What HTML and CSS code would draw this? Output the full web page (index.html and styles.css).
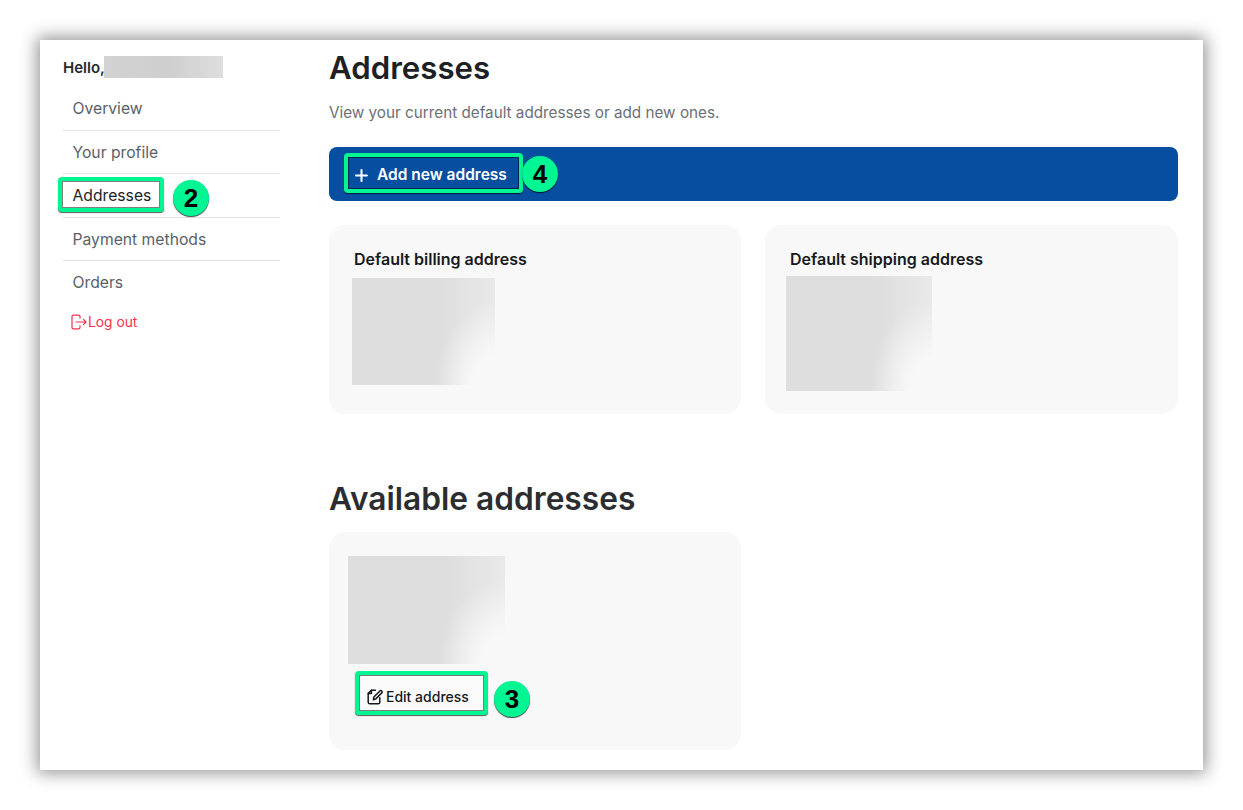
FILE: index.html
```html
<!DOCTYPE html>
<html lang="en">
<head>
<meta charset="utf-8">
<title>Addresses</title>
<link rel="stylesheet" href="styles.css">
</head>
<body>
<div class="window">
  <aside class="sidebar">
    <div class="hello">Hello,<span class="redact redact-name"></span></div>
    <nav class="menu">
      <a class="item">Overview</a>
      <a class="item">Your profile</a>
      <a class="item item-active"><span class="hl hl-nav"></span><span class="label-active">Addresses</span><span class="badge badge-nav">2</span></a>
      <a class="item">Payment methods</a>
      <a class="item item-last">Orders</a>
    </nav>
    <a class="logout">
      <svg class="logout-icon" viewBox="0 0 16 16" fill="none" stroke="currentColor" stroke-width="1.2" stroke-linecap="round" stroke-linejoin="round"><path d="M9 4.2V2.6A1.4 1.4 0 0 0 7.6 1.2H2.4A1.4 1.4 0 0 0 1 2.6v10.8a1.4 1.4 0 0 0 1.4 1.4h5.2A1.4 1.4 0 0 0 9 13.4v-1.6"/><path d="M5 8h10M12.4 5.4 15 8l-2.6 2.6"/></svg>
      <span>Log out</span>
    </a>
  </aside>
  <main class="content">
    <h1 class="title">Addresses</h1>
    <p class="lead">View your current default addresses or add new ones.</p>
    <div class="bar">
      <button class="add-btn">
        <span class="hl hl-add"></span>
        <svg class="plus" viewBox="0 0 12 12" fill="none" stroke="currentColor" stroke-width="1.9" stroke-linecap="round"><path d="M6 1v10M1 6h10"/></svg>
        <span>Add new address</span>
        <span class="badge badge-add">4</span>
      </button>
    </div>
    <div class="cards">
      <section class="card">
        <h2 class="card-title">Default billing address</h2>
        <div class="redact redact-billing"></div>
      </section>
      <section class="card">
        <h2 class="card-title">Default shipping address</h2>
        <div class="redact redact-shipping"></div>
      </section>
    </div>
    <h2 class="subtitle">Available addresses</h2>
    <div class="cards">
      <section class="card card-plain">
        <div class="redact redact-address"></div>
        <button class="edit-btn">
          <span class="hl hl-edit"></span>
          <svg class="edit-icon" viewBox="0 0 16 16" fill="none" stroke="currentColor" stroke-width="1.5" stroke-linecap="round" stroke-linejoin="round"><path d="M8.4 1.2H4.4L1.2 4.4v8.8a1.6 1.6 0 0 0 1.6 1.6h8.4a1.6 1.6 0 0 0 1.6-1.6V8.8"/><path d="M4.4 1.2v3.2H1.2"/><path d="M6.4 10.8 6.9 8l6-6a1.3 1.3 0 0 1 1.9 1.9l-6 6z"/></svg>
          <span>Edit address</span>
          <span class="badge badge-edit">3</span>
        </button>
      </section>
    </div>
  </main>
</div>
</body>
</html>
```
FILE: styles.css
```css
* { box-sizing: border-box; }
html, body { margin: 0; height: 100%; }
body {
  width: 1243px;
  height: 810px;
  padding: 40px;
  background: #fff;
  font-family: Inter, "Noto Sans", sans-serif;
  overflow: hidden;
}
.window {
  width: 1163px;
  height: 730px;
  display: flex;
  background: #fff;
  box-shadow: 0 0 16px 3px rgba(0, 0, 0, .42);
  padding: 15px 25px 0 23px;
}
.sidebar { width: 217px; flex: none; margin-right: 49px; }
.hello {
  display: flex;
  height: 23px;
  padding-top: 1px;
  font-size: 15px;
  font-weight: 600;
  line-height: 23px;
  color: #26292d;
}
.redact-name {
  width: 119px;
  height: 22px;
  margin-left: -1px;
  background: linear-gradient(90deg, #d2d2d2, #cfcfcf 55%, #dedede);
}
.menu { display: flex; flex-direction: column; margin-top: 9px; }
.item {
  position: relative;
  height: 43.5px;
  padding: 10px 0 0 9.5px;
  font-size: 15.7px;
  line-height: 24px;
  color: #5a6068;
  border-bottom: 1px solid #e3e3e3;
}
.item-last { border-bottom: 0; }
.label-active { position: relative; color: #20242a; }
.hl {
  position: absolute;
  border: 4px solid #00f593;
  border-radius: 4px;
  box-shadow: 0 1px 1px rgba(0, 0, 0, .65), inset 0 0 0 1px rgba(0, 0, 0, .5);
}
.hl-nav { left: -5px; top: 3px; width: 106px; height: 35px; background: #fff; }
.badge {
  position: absolute;
  width: 36px;
  height: 36px;
  border-radius: 50%;
  background: #00f593;
  color: #000;
  font-family: "Liberation Sans", Arial, sans-serif;
  font-weight: 700;
  font-size: 26px;
  line-height: 36px;
  text-align: center;
  box-shadow: 0 1px 1px rgba(0, 0, 0, .75);
}
.badge-nav { left: 110px; top: 6px; }
.logout {
  display: flex;
  align-items: center;
  gap: 1px;
  margin: 7px 0 0 8px;
  font-size: 13.8px;
  line-height: 20px;
  color: #f8304f;
}
.logout-icon { width: 16px; height: 16px; }
.content { flex: 1; min-width: 0; }
.title {
  margin: 0;
  font-size: 31.2px;
  line-height: 26px;
  font-weight: 600;
  color: #1d2024;
}
.lead {
  margin: 20px 0 0;
  font-size: 15.25px;
  line-height: 24px;
  color: #6b7077;
}
.bar {
  display: flex;
  align-items: center;
  height: 54px;
  margin-top: 22px;
  padding: 2px 0 0 26px;
  background: #064fa0;
  border-radius: 8px;
}
.add-btn {
  position: relative;
  display: flex;
  align-items: center;
  gap: 9px;
  padding: 0;
  border: 0;
  background: none;
  color: #fff;
  font: 600 15.5px/24px Inter, sans-serif;
}
.plus { width: 13px; height: 13px; }
.hl-add { left: -11px; top: -10px; width: 179px; height: 40px; }
.badge-add { left: 167px; top: -7px; }
.cards {
  display: grid;
  grid-template-columns: 412px 413px;
  gap: 24px;
  margin-top: 24px;
}
.card {
  height: 189px;
  padding: 22px 25px;
  background: #f8f8f8;
  border-radius: 16px;
}
.card-title {
  margin: 0;
  font-size: 16px;
  line-height: 24px;
  font-weight: 600;
  color: #17191c;
}
.redact-billing,
.redact-shipping,
.redact-address {
  background:
    radial-gradient(ellipse 42% 78% at 100% 100%, #f8f8f8 35%, rgba(248, 248, 248, 0) 100%),
    linear-gradient(90deg, #dedede 62%, #e9e9e9);
}
.redact-billing { width: 143px; height: 107px; margin: 7px 0 0 -2px; }
.redact-shipping { width: 146px; height: 115px; margin: 5px 0 0 -4px; }
.subtitle {
  margin: 68px 0 0;
  font-size: 31.7px;
  line-height: 34px;
  font-weight: 600;
  color: #2b2d30;
}
.subtitle + .cards { margin-top: 16px; }
.card-plain { height: 218px; padding: 24px 19px; }
.redact-address { width: 157px; height: 108px; }
.edit-btn {
  position: relative;
  display: flex;
  align-items: center;
  gap: 3px;
  margin: 22px 0 0 19px;
  padding: 0;
  border: 0;
  background: none;
  color: #17191c;
  font: 500 14px/22px Inter, sans-serif;
}
.edit-btn > * { position: relative; }
.edit-icon { width: 16px; height: 16px; }
.edit-btn > .hl { position: absolute; left: -12px; top: -15px; width: 133px; height: 44px; background: #fbfbfb; }
.edit-btn > .badge { position: absolute; left: 127px; top: -5px; }
```
